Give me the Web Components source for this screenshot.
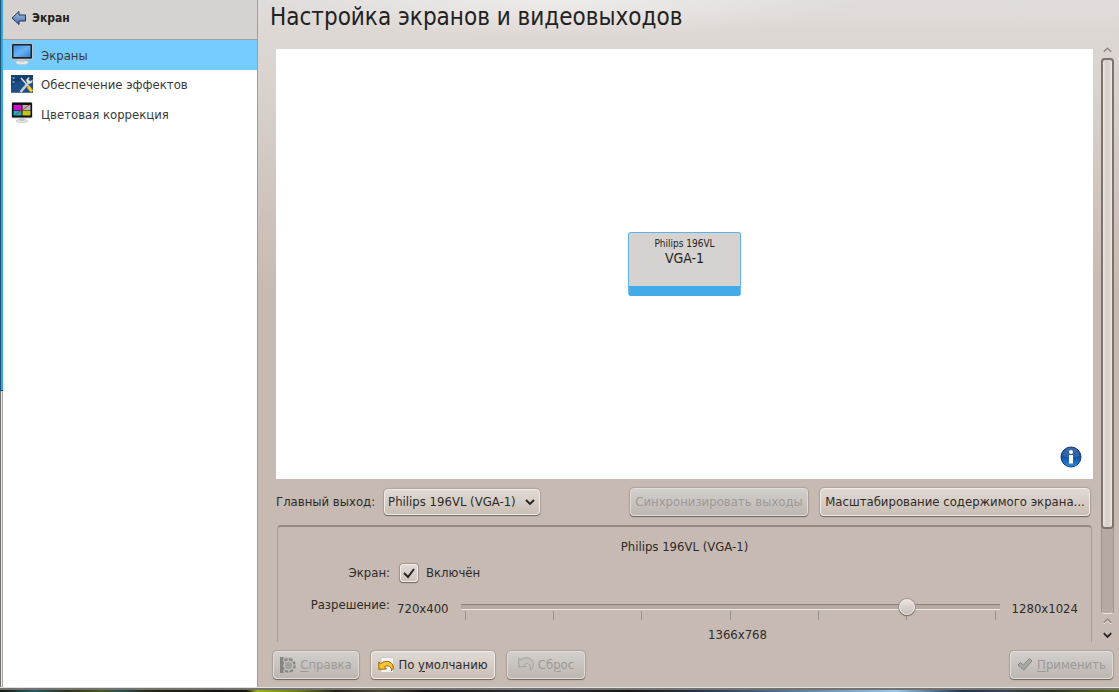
<!DOCTYPE html>
<html lang="ru">
<head>
<meta charset="utf-8">
<title>Настройка экранов и видеовыходов</title>
<style>
html, body { margin: 0; height: 100%; }
body {
  font: 13px/16px "DejaVu Sans Condensed", "DejaVu Sans", sans-serif;
  font-stretch: condensed;
  color: #2d2b2a;
  overflow: hidden;
}
</style>
</head>
<body>
<settings-window></settings-window>
<script>
const define = (name, html, setup) => {
  const template = document.createElement("template");
  template.innerHTML = html;
  customElements.define(name, class extends HTMLElement {
    constructor() {
      super();
      this.attachShadow({ mode: "open" }).append(template.content.cloneNode(true));
    }
    connectedCallback() { if (setup) setup(this, this.shadowRoot); }
  });
};

define("nav-item", `
<style>
:host { display: block; }
a { display: flex; align-items: center; gap: 8px; height: 30px; padding-left: 8px; color: #3a3a3a; text-decoration: none; }
:host([current]) a { background: #77ccff; }
span { padding-top: 1px; }
::slotted(svg) { width: 22px; height: 22px; flex: none; display: block; overflow: visible; }
</style>
<a href="#"><slot name="icon"></slot><span><slot></slot></span></a>`);

define("side-nav", `
<style>
:host { display: flex; flex-direction: column; background: #fff; border-right: 1px solid #a39d99; }
.back { display: flex; align-items: flex-start; gap: 5px; height: 40px; padding: 10px 0 0 8px; box-sizing: border-box; background: #d6d2cf; border-bottom: 1px solid #a7a19d;
  font-size: 12px; font-weight: bold; color: #222; text-decoration: none; }
.back svg { width: 16px; height: 16px; }
nav { margin-top: -1px; border-top: 1px solid #a7a19d; }
nav-item[current] { margin-bottom: -1px; }
</style>
<a class="back" href="#"><svg viewBox="0 0 16 16"><defs><linearGradient id="g" x2="0" y2="1"><stop stop-color="#a9c4e6"/><stop offset="1" stop-color="#3f6aa8"/></linearGradient></defs><path d="M1 8 8 1.500V5h6.500v6H8v3.500z" fill="url(#g)" stroke="#20355c" stroke-linejoin="round"/></svg>Экран</a>
<nav>
<nav-item current><svg slot="icon" viewBox="0 0 22 22"><defs><linearGradient id="s" x1="0" y1="0" x2="1" y2="1"><stop stop-color="#3f8fe0"/><stop offset=".5" stop-color="#68b2f4"/><stop offset="1" stop-color="#2f83da"/></linearGradient></defs><ellipse cx="11" cy="18.500" rx="6.500" ry="2" fill="#ececec" stroke="#b5b9bd" stroke-width=".6"/><path d="M8.500 15h5v3.500h-5z" fill="#ccd0d4"/><rect x=".3" y="-.6" width="21.400" height="16.400" rx="2" fill="#e2e2e2" stroke="#a9aaac" stroke-width=".6"/><rect x="1" y="0" width="20" height="14.800" rx="1" fill="#202124"/><path d="M2.500 1.500h17v11.500h-17z" fill="url(#s)"/></svg>Экраны</nav-item>
<nav-item><svg slot="icon" viewBox="0 0 22 22"><path d="M0 2h22v17.500H0z" fill="#153f70"/><path d="M0 13q10-8 22-6v12.500H0z" fill="#1d4f87"/><path d="M1.500 4h2v2h-2zM1.500 8h2v2h-2z" fill="#6f9abf"/><path d="m10 5 9 10" stroke="#d9dee2" stroke-width="1.500"/><path d="m17 13.500 4 5" stroke="#f4c51d" stroke-width="3.200"/><path d="m9.500 19 8.500-10" stroke="#c8cdd0" stroke-width="2.600"/><path d="m16 9.500-1-2.500 2-2.500 1.500-.5-.8 3 1.500 1.200 2.500-1.700-.5 3-2.500 1.500z" fill="#e3e6e8" stroke="#777" stroke-width=".4"/></svg>Обеспечение эффектов</nav-item>
<nav-item><svg slot="icon" viewBox="0 0 22 22"><ellipse cx="11" cy="18" rx="6" ry="1.700" fill="#e4e4e4" stroke="#babdc0" stroke-width=".6"/><path d="M8.500 14h5v4h-5z" fill="#c9c9c9"/><rect x=".3" y="-.8" width="21.400" height="16.200" rx="1.500" fill="#cfcfcf"/><rect x="1" y="-.4" width="20" height="15" rx="1" fill="#101010"/><path d="M2.500 2h8v5.500h-8z" fill="#c812cf"/><path d="M11.500 2h8v5.500h-8z" fill="#b5b5b5"/><path d="M2.500 8h8v4.500h-8z" fill="#12b5c5"/><path d="M11.500 8h8v4.500h-8z" fill="#c6c40e"/><path d="m4 12.500 5-4.500 2-1 8-5.500" fill="none" stroke="#d12222" stroke-width=".9"/></svg>Цветовая коррекция</nav-item>
</nav>`);

define("push-button", `
<style>
:host { display: block; }
button { display: flex; align-items: center; justify-content: center; gap: 4px; width: 100%; height: 28px; box-sizing: border-box; padding: 0 5px; margin: 0;
  font: inherit; color: #2d2b2a; white-space: nowrap; border: 1px solid #f2ece6; border-radius: 4px;
  background: linear-gradient(#e0dad5, #cbbfb5); box-shadow: 0 1px 1px #6f6660, 0 0 1px 1px #b0a59e; }
:host([disabled]) button { color: #9d9996; border-color: #e0dcd8; background: linear-gradient(#d2cfcc, #bdb7b3); }
::slotted(svg) { width: 16px; height: 16px; flex: none; }
</style>
<button type="button"><slot name="icon"></slot><span><slot></slot></span></button>`,
(host, root) => { root.querySelector("button").disabled = host.hasAttribute("disabled"); });

define("output-tile", `
<style>
:host { display: flex; flex-direction: column; align-items: center; width: 111px; height: 53px; background: #d6d2cf; border: 1px solid #5cb2ea; border-bottom: 10px solid #43ace8; border-radius: 3px; color: #222; }
.model { font-size: 10px; line-height: 12px; margin-top: 5px; }
.port { font-size: 14px; line-height: 17px; }
</style>
<span class="model"><slot name="model"></slot></span><span class="port"><slot></slot></span>`);

define("output-view", `
<style>
:host { display: grid; place-items: center; position: relative; height: 430px; background: #fff; }
.info { position: absolute; right: 11px; bottom: 11px; width: 22px; height: 22px; padding: 0; border: 0; background: none; }
svg { display: block; width: 22px; height: 22px; }
</style>
<slot></slot>
<button class="info" type="button" aria-label="Сведения"><svg viewBox="0 0 22 22"><defs><linearGradient id="i" x2="0" y2="1"><stop stop-color="#1d4f9b"/><stop offset=".45" stop-color="#0d4a9c"/><stop offset="1" stop-color="#2d8be0"/></linearGradient></defs><circle cx="11" cy="11" r="10" fill="url(#i)" stroke="#123c78"/><path d="M2.500 10a8.500 8.500 0 0 1 17 0q-8 3-17 0z" fill="#fff" opacity=".14"/><circle cx="11" cy="6" r="2" fill="#fff"/><path d="M9 9h4v8.500H9z" fill="#fff"/></svg></button>`);

define("resolution-slider", `
<style>
:host { display: grid; grid-template-columns: auto 1fr auto; column-gap: 8px; }
.end { margin-top: 4px; }
.rail { min-width: 0; }
input { -webkit-appearance: none; appearance: none; display: block; position: relative; width: 100%; height: 20px; margin: 0; background: none; }
input::-webkit-slider-runnable-track { height: 20px; background: linear-gradient(#89807a 0 1px, #b6a9a2 1px 5px, #efe8e2 5px 6px) center / calc(100% - 8px) 6px no-repeat; }
input::-webkit-slider-thumb { -webkit-appearance: none; width: 16px; height: 16px; margin-top: 2px; border-radius: 50%; border: 1px solid #eeeae6; background: linear-gradient(#e8e4e1, #c7c1bc); box-shadow: 0 1px 1px #6f6660, 0 0 1px 1px #a0968f; }
.ticks { display: flex; justify-content: space-between; margin: -6px 8px 0; height: 9px; }
.ticks i { width: 1px; background: #9a8f88; }
output { grid-column: 1 / -1; text-align: center; margin-top: 7px; }
</style>
<span class="end">720x400</span>
<div class="rail"><input type="range" min="0" max="6" value="5" aria-label="Разрешение">
<div class="ticks"><i></i><i></i><i></i><i></i><i></i><i></i><i></i></div></div>
<span class="end">1280x1024</span>
<output>1366x768</output>`);

define("output-settings", `
<style>
:host { display: block; box-sizing: border-box; height: 160px; border: 1px solid #a99d96; border-top: 2px solid #968a83; border-radius: 4px; padding: 12px 13px 0 0; }
h2 { font: inherit; text-align: center; margin: 0 -13px 0 0; }
.row { display: grid; grid-template-columns: 112px 1fr; column-gap: 7px; }
.row > :first-child { text-align: right; }
.enabled { margin-top: 9px; align-items: center; }
.check { display: flex; align-items: center; gap: 8px; margin-left: 3px; }
input { -webkit-appearance: none; appearance: none; width: 18px; height: 18px; margin: 0; border: 1px solid #f4eee9; border-radius: 3px; box-shadow: 0 1px 1px #6f6660, 0 0 1px 1px #a0968f;
  background: url("data:image/svg+xml,%3Csvg xmlns='http://www.w3.org/2000/svg' viewBox='0 0 16 16'%3E%3Cpath d='m3 8 4 4 6-8' fill='none' stroke='%23222' stroke-width='2'/%3E%3C/svg%3E") center / 16px no-repeat, linear-gradient(#e0dad5, #cfc4bb); }
.mode { margin-top: 15px; }
</style>
<h2>Philips 196VL (VGA-1)</h2>
<div class="row enabled"><label for="on">Экран:</label><label class="check"><input id="on" type="checkbox" checked>Включён</label></div>
<div class="row mode"><span>Разрешение:</span><resolution-slider></resolution-slider></div>`);

define("scroll-bar", `
<style>
:host { display: flex; flex-direction: column; align-items: center; width: 13px; }
button { display: block; width: 13px; height: 14px; padding: 0; border: 0; background: none; }
svg { display: block; width: 13px; height: 14px; fill: none; stroke: #8f8680; stroke-width: 1.500; }
.down svg { stroke: #222; stroke-width: 2; }
.track { flex: 1; width: 100%; box-sizing: border-box; background: #b6a9a2; border: 1px solid #a0958e; border-bottom-color: #eee6e0; border-radius: 4px; margin: 1px 0 0; }
.thumb { height: 85%; width: 13px; margin: -1px; box-sizing: border-box; border: 2px solid #7d726c; border-radius: 4px; background: linear-gradient(90deg, #eee9e5, #d8d0ca 3px 6px, #eee9e5); }
</style>
<button type="button" aria-label="Вверх"><svg viewBox="0 0 14 14"><path d="m3 9 4-4 4 4"/></svg></button>
<div class="track"><div class="thumb"></div></div>
<button type="button" aria-label="Вверх"><svg viewBox="0 0 14 14"><path d="m3 10 4-4 4 4" stroke="#f0eae6"/><path d="m3 9 4-4 4 4"/></svg></button>
<button type="button" aria-label="Вниз" class="down"><svg viewBox="0 0 14 14"><path d="m3 5 4 4 4-4"/></svg></button>`);

define("settings-window", `
<style>
:host { display: grid; grid-template: minmax(0, 1fr) 5px / 3px 255px minmax(0, 1fr); height: 100vh; }
.edge { background: linear-gradient(#1f5475, #1f5475) 0 0 / 1px 390px no-repeat, linear-gradient(90deg, #77716d 1px, transparent 1px 2px, #aaa6a3 2px) 0 391px no-repeat, linear-gradient(#35a5e4 0 390px, #154b6a 390px 391px, #e8e6e4 391px); }
.desk { grid-column: 1 / -1; border-top: 1px solid #e6e0dc; background:
  linear-gradient(#77716d, #77716d) 0 0 / 100% 2px no-repeat,
  linear-gradient(90deg, #101913 0, #285967 3%, #26351a 6%, #405b1c 9%, #294d5c 11%, #232d17 13%, #101112 20%, #15180d 22%, #9db51b 23%, #65751a 27%, #231f18 30%, #4a4930 34%, #101014 38%, #29303e 47%, #151719 56%, #23384f 63%, #9cc9ef 80%, #1e344a 86%, #334457 90%, #24351c 94%, #557019 100%); }
main { display: flex; flex-direction: column; min-width: 0; min-height: 0; box-sizing: border-box; padding: 0 5px 8px 14px;
  background: radial-gradient(ellipse 300px 36px at 35% 0, #efebe9, #efebe900), linear-gradient(#e0dcd9 0, #dcd6d2 50px, #c7bab2 290px); }
h1 { font-size: 24px; font-weight: normal; line-height: 32px; margin: 0 0 0 -2px; padding: 1px 0 10px; color: #222; }
.scroll { flex: 1; display: flex; gap: 8px; min-height: 0; padding-left: 4px; }
.content { flex: 1; min-width: 0; overflow: hidden; padding-top: 6px; }
.bar { display: flex; align-items: center; padding: 9px 3px 9px 0; }
.bar label { margin-right: 9px; }
select { -webkit-appearance: none; appearance: none; height: 26px; width: 156px; box-sizing: border-box; padding: 0 20px 0 3px; font: inherit; color: #2d2b2a; border: 1px solid #f2ece6; border-radius: 4px; box-shadow: 0 1px 1px #6f6660, 0 0 1px 1px #b0a59e;
  background: url("data:image/svg+xml,%3Csvg xmlns='http://www.w3.org/2000/svg' viewBox='0 0 10 10'%3E%3Cpath d='m1 3 4 4 4-4' fill='none' stroke='%23222' stroke-width='1.8'/%3E%3C/svg%3E") right 4px center / 10px no-repeat, linear-gradient(#e0dad5, #cbbfb5); }
.space { flex: 1; }
.sync { width: 178px; margin-right: 12px; }
.scale { width: 270px; }
.help { width: 86px; }
.defaults { width: 124px; }
.reset { width: 78px; }
.apply { width: 103px; margin-right: 1px; }
.panel { margin: 0 1px; }
.actions { display: flex; gap: 12px; padding: 9px 0 0 1px; }
u { text-underline-offset: 2px; }
</style>
<div class="edge"></div>
<side-nav></side-nav>
<main>
<h1>Настройка экранов и видеовыходов</h1>
<div class="scroll">
<div class="content">
<output-view><output-tile><span slot="model">Philips 196VL</span>VGA-1</output-tile></output-view>
<div class="bar"><label for="primary">Главный выход:</label><select id="primary"><option>Philips 196VL (VGA-1)</option></select><span class="space"></span>
<push-button class="sync" disabled>Синхронизировать выходы</push-button>
<push-button class="scale">Масштабирование содержимого экрана...</push-button></div>
<output-settings class="panel"></output-settings>
</div>
<scroll-bar></scroll-bar>
</div>
<div class="actions">
<push-button class="help" disabled><svg slot="icon" viewBox="0 0 16 16"><path d="M0 0h4v16H0z" fill="#858481"/><path d="M3 .5h10v15H3z" fill="#b5b3b0"/><circle cx="8.500" cy="8.500" r="6" fill="none" stroke="#878582" stroke-width="2.500" stroke-dasharray="3 1.700"/><circle cx="8.500" cy="8.500" r="4.500" fill="#a3a19e" stroke="#d3d1ce"/></svg><u>С</u>правка</push-button>
<push-button class="defaults"><svg slot="icon" viewBox="0 0 16 16"><path d="M3 .5h12.500v14l-1 1H3z" fill="#f5f5f5" stroke="#c8c8c8"/><path d="m.8 5 1.900 1.800C7 2.500 14.500 4 15.300 10c.2 2-.8 3-1.800 3.800.4-4-3.500-6.500-7-4l2 2.200-7.700.3z" fill="#f6c431" stroke="#9a6308" stroke-linejoin="round"/></svg>По <u>у</u>молчанию</push-button>
<push-button class="reset" disabled><svg slot="icon" viewBox="0 0 16 16"><path d="m.8 1 2 2C7-.8 14.500.5 15.300 6.500c.3 3-1 5-3 6.500 1-5-2.500-8-6.300-5.500L8 9.500.8 10z" fill="#c4c1be" stroke="#a29f9c" stroke-linejoin="round"/></svg>Сб<u>р</u>ос</push-button>
<span class="space"></span>
<push-button class="apply" disabled><svg slot="icon" viewBox="0 0 16 16"><path d="m1 8 2.500-2.500L6.500 8l6-6.500L15 4 6.800 13z" fill="#aaa8a5" stroke="#858381" stroke-linejoin="round"/></svg><u>П</u>рименить</push-button>
</div>
</main>
<div class="desk"></div>`);
</script>
</body>
</html>
